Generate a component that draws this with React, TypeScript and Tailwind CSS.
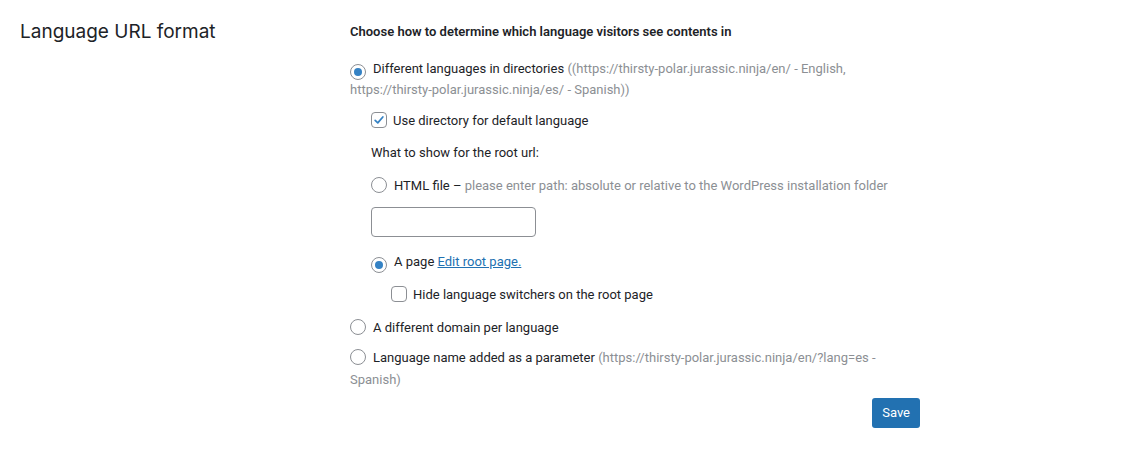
import React from "react";

const font = { fontFamily: "Roboto, 'Noto Sans', sans-serif" };

function Radio({ checked }: { checked?: boolean }) {
  return (
    <span className="relative mr-[7px] inline-flex h-4 w-4 shrink-0 items-center justify-center rounded-full border border-[#8c8f94] bg-white align-[-3px]">
      {checked && <span className="h-2 w-2 rounded-full bg-[#3582c4]" />}
    </span>
  );
}

function Checkbox({ checked }: { checked?: boolean }) {
  return (
    <span className="mr-[6px] inline-flex h-4 w-4 shrink-0 items-center justify-center rounded-[4px] border border-[#8c8f94] bg-white align-[-3px]">
      {checked && (
        <svg viewBox="0 0 16 16" className="h-4 w-4">
          <path d="M3.6 8.4 6.6 11.3 12.4 4.6" fill="none" stroke="#3582c4" strokeWidth="2" strokeLinecap="round" strokeLinejoin="round" />
        </svg>
      )}
    </span>
  );
}

export default function App() {
  return (
    <div className="flex min-h-[451px] bg-white pt-[22px] text-[#1d2327]" style={font}>
      <div className="w-[350px] shrink-0 pl-5">
        <h2 className="text-[19px] leading-[20px] font-normal text-[#1d2327]" style={{ fontFamily: "Inter, sans-serif" }}>
          Language URL format
        </h2>
      </div>

      <div className="w-[570px] text-[13px] leading-[20px]">
        <p className="font-semibold">Choose how to determine which language visitors see contents in</p>

        <p className="mt-[17px]">
          <Radio checked />
          Different languages in directories{" "}
          <span className="text-[#8c8f94]">
            ((https://thirsty-polar.jurassic.ninja/en/ - English, https://thirsty-polar.jurassic.ninja/es/ - Spanish))
          </span>
        </p>

        <div className="pl-[21px]">
          <p className="mt-[11px]">
            <Checkbox checked />
            Use directory for default language
          </p>

          <p className="mt-[12px]">What to show for the root url:</p>

          <p className="mt-[13px]">
            <Radio />
            HTML file –{" "}
            <span className="text-[#8c8f94]">
              please enter path: absolute or relative to the WordPress installation folder
            </span>
          </p>

          <input
            type="text"
            className="mt-[11px] block h-[30px] w-[165px] rounded-[4px] border border-[#8c8f94] bg-white px-2 outline-none"
          />

          <p className="mt-[15px]">
            <Radio checked />
            A page{" "}
            <a href="#" className="text-[#2271b1] underline">
              Edit root page.
            </a>
          </p>

          <p className="mt-[12px] pl-[20px]">
            <Checkbox />
            Hide language switchers on the root page
          </p>
        </div>

        <p className="mt-[13px]">
          <Radio />
          A different domain per language
        </p>

        <p className="mt-[9px] leading-[22px]">
          <Radio />
          Language name added as a parameter{" "}
          <span className="text-[#8c8f94]">
            (https://thirsty-polar.jurassic.ninja/en/?lang=es - Spanish)
          </span>
        </p>

        <div className="mt-[7px] flex justify-end">
          <button className="h-[30px] rounded-[3px] bg-[#2271b1] px-[10px] text-[13px] text-white">Save</button>
        </div>
      </div>
    </div>
  );
}
